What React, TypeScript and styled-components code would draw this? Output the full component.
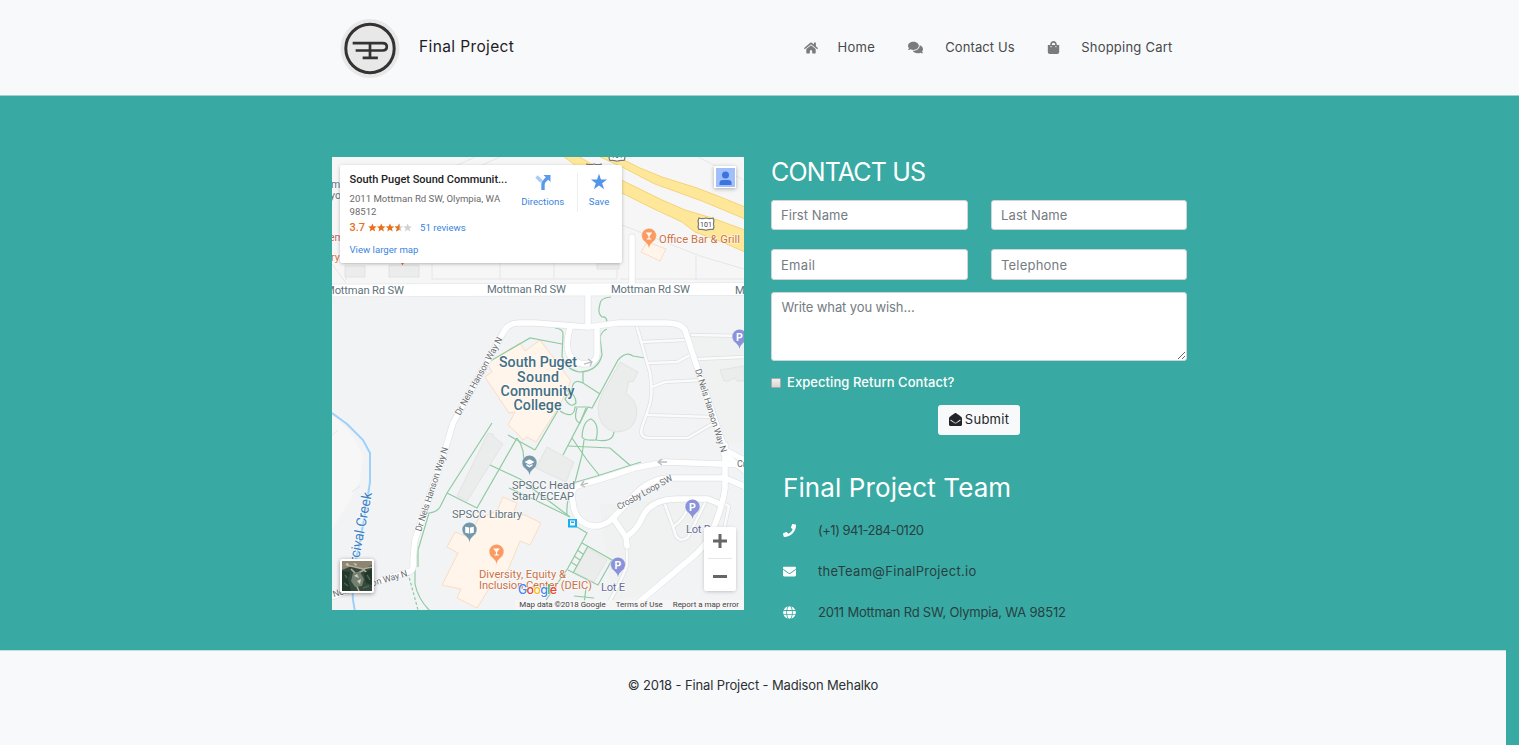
import React from 'react';
import styled, { createGlobalStyle } from 'styled-components';
import { FaHome, FaComments, FaShoppingBag, FaEnvelopeOpen, FaPhone, FaEnvelope, FaGlobe } from 'react-icons/fa';

const Global = createGlobalStyle`
  *, *::before, *::after { box-sizing: border-box; }
  html, body { margin: 0; padding: 0; }
  body {
    background: #38aaa3;
    color: #212529;
    font-family: Inter, 'Open Sans', sans-serif;
    font-size: 13px;
    line-height: 1.5;
    overflow: hidden;
  }
  h1, h2, p { margin: 0; font-weight: 400; }
`;

const Page = styled.div`
  display: flex;
  flex-direction: column;
  height: 745px;
`;

const Header = styled.header`
  height: 96px;
  flex: none;
  background: #f8f9fb;
  border-bottom: 1px solid #9fd0d0;
  display: flex;
  justify-content: center;
`;

const HeaderInner = styled.div`
  width: 855px;
  display: flex;
  align-items: center;
  justify-content: space-between;
  padding: 0 14.5px 0 8px;
`;

const Brand = styled.a`
  display: flex;
  align-items: center;
  gap: 19px;
  font-size: 15.5px;
  color: #1d2023;
  svg { width: 60px; height: 60px; display: block; }
`;

const BrandName = styled.span`
  padding-bottom: 2px;
`;

const Nav = styled.nav`
  display: flex;
  align-items: center;
  color: #48494b;
`;

const NavItem = styled.a<{ $gap: number; $after: number }>`
  display: flex;
  align-items: center;
  gap: ${(p) => p.$gap}px;
  margin-right: ${(p) => p.$after}px;
  svg { color: #7b7b7b; display: block; }
`;

const Tracked = styled.span<{ $track?: number; $weight?: number }>`
  letter-spacing: ${(p) => p.$track ?? 0}px;
  font-weight: ${(p) => p.$weight ?? 400};
  white-space: nowrap;
`;

const Main = styled.main`
  flex: none;
  height: 553.5px;
  display: flex;
  justify-content: center;
  gap: 27px;
  padding-top: 61px;
`;

const MapFrame = styled.section`
  position: relative;
  width: 412px;
  height: 453px;
  overflow: hidden;
  background: #f2f3f5;
  font-family: Roboto, sans-serif;
  > svg { display: block; }
`;

const PlaceCard = styled.div`
  position: absolute;
  left: 8px;
  top: 8px;
  width: 282px;
  height: 98px;
  background: #fff;
  border-radius: 2px;
  box-shadow: 0 1px 4px -1px rgba(0, 0, 0, 0.4);
  display: flex;
  padding: 8px 0 0 9.5px;
  font-size: 9.6px;
  line-height: 13px;
  color: #6b6b6b;
`;

const PlaceInfo = styled.div`
  width: 163px;
  display: flex;
  flex-direction: column;
`;

const PlaceTitle = styled.div`
  font-size: 11px;
  font-weight: 500;
  color: #222;
  line-height: 13px;
  white-space: nowrap;
  margin-bottom: 6px;
`;

const Rating = styled.div`
  display: flex;
  align-items: center;
  gap: 3px;
  margin: 3px 0 9px;
  color: #e7711b;
  font-size: 11px;
  font-weight: 500;
`;

const MapLink = styled.span<{ $left?: number }>`
  color: #3a84df;
  font-size: 9.6px;
  font-weight: 400;
  margin-left: ${(p) => p.$left ?? 0}px;
`;

const PlaceAction = styled.div<{ $width: number; $line?: boolean }>`
  width: ${(p) => p.$width}px;
  height: 39px;
  display: flex;
  flex-direction: column;
  align-items: center;
  gap: 4px;
  padding-right: ${(p) => (p.$line ? 4 : 0)}px;
  color: #3a84df;
  border-right: ${(p) => (p.$line ? '1px solid #eeeeee' : '0')};
  svg { display: block; }
`;

const Avatar = styled.div`
  position: absolute;
  left: 382px;
  top: 9px;
  width: 22px;
  height: 22px;
  padding: 1.5px;
  background: #fff;
  box-shadow: 0 1px 4px rgba(0, 0, 0, 0.3);
  svg { display: block; }
`;

const Thumb = styled.div`
  position: absolute;
  left: 8px;
  top: 402px;
  width: 34px;
  height: 34px;
  padding: 2px;
  background: #fff;
  border-radius: 2px;
  box-shadow: 0 1px 4px rgba(0, 0, 0, 0.4);
  svg { display: block; }
`;

const ZoomBox = styled.div`
  position: absolute;
  left: 372px;
  top: 370px;
  width: 32px;
  height: 64px;
  background: #fff;
  border-radius: 2px;
  box-shadow: 0 1px 4px -1px rgba(0, 0, 0, 0.3);
  svg { display: block; }
`;

const Legal = styled.div`
  position: absolute;
  right: 0;
  bottom: 0;
  height: 10px;
  padding: 0 5px 0 4px;
  display: flex;
  gap: 10px;
  background: rgba(247, 247, 247, 0.75);
  color: #444;
  font-size: 7.95px;
  line-height: 10px;
  white-space: nowrap;
`;

const Side = styled.section`
  width: 416px;
  display: flex;
  flex-direction: column;
`;

const Heading = styled.h1<{ $track: number; $size: number }>`
  font-size: ${(p) => p.$size}px;
  line-height: 30px;
  color: #fff;
  font-weight: 400;
  letter-spacing: ${(p) => p.$track}px;
  white-space: nowrap;
`;

const Fields = styled.div`
  display: grid;
  grid-template-columns: 197px 196px;
  column-gap: 23px;
  row-gap: 19px;
  margin-top: 13px;
`;

const fieldBox = `
  border: 1px solid #ced4da;
  border-radius: 3px;
  background: #fff;
  outline: 0;
  font-family: Inter, 'Open Sans', sans-serif;
  font-size: 13px;
`;

const Field = styled.input<{ $track: number }>`
  ${fieldBox}
  width: 100%;
  height: 30.4px;
  padding: 0 9px;
  &::placeholder { color: #757c83; opacity: 1; letter-spacing: ${(p) => p.$track}px; }
`;

const Message = styled.textarea<{ $track: number }>`
  ${fieldBox}
  width: 416px;
  height: 69px;
  margin-top: 12.2px;
  padding: 4px 9.5px;
  line-height: 20px;
  resize: vertical;
  display: block;
  &::placeholder { color: #757c83; opacity: 1; letter-spacing: ${(p) => p.$track}px; }
`;

const CheckRow = styled.label`
  display: flex;
  align-items: center;
  gap: 6px;
  height: 20px;
  margin-top: 12px;
  color: #fff;
`;

const CheckBox = styled.span`
  width: 10px;
  height: 10px;
  background: linear-gradient(#f0f0f0, #d6d6d6);
  border: 1px solid #a9a9a9;
  border-radius: 1px;
`;

const Submit = styled.button`
  align-self: center;
  display: flex;
  align-items: center;
  justify-content: center;
  gap: 3px;
  width: 82px;
  height: 30px;
  margin-top: 12px;
  padding: 0;
  border: 0;
  border-radius: 3px;
  background: #f8f9fb;
  color: #212529;
  font: inherit;
`;

const Team = styled.div`
  padding: 38px 0 0 12px;
`;

const TeamRow = styled.div<{ $top: number }>`
  display: flex;
  align-items: center;
  gap: 22px;
  height: 20px;
  margin-top: ${(p) => p.$top}px;
  color: #293f42;
  svg { color: #fff; display: block; }
`;

const Footer = styled.footer`
  flex: none;
  width: 1506px;
  height: 95.5px;
  padding-top: 25px;
  background: #f8f9fb;
  border-top: 1px solid #c9dcdf;
  text-align: center;
  color: #2c3034;
`;

const Logo = () => (
  <svg viewBox="0 0 60 60" fill="none" stroke="#333" strokeLinecap="square">
    <circle cx="30" cy="30.5" r="29.5" fill="#e9e8e8" stroke="none" />
    <circle cx="30" cy="30.5" r="24.2" strokeWidth="3" />
    <path d="M14 25.2H42.5Q46.8 25.2 46.8 28.7Q46.8 32.5 42.5 32.5H17M30 25.2V39.8M24 39.8H36.5" strokeWidth="2.7" />
  </svg>
);

const roads = {
  main: [
    'M325 599L373 583L411 571Q414 568 413 560L415 540L430 495L443 457L453 423L477 380L503 333Q508 323 518 323H535L588 327L618 323H666Q681 323 685 330L697 367L725 450L746 461',
    'M588 296V326',
    'M725 445V488Q723 505 712 532Q706 545 695 555L645 597L632 608',
    'M570 328Q565 345 569 354Q577 367 590 363Q597 361 597 353V328',
    'M746 465L665 462L635 468L598 480L580 485Q571 487 572 497L574 509Q580 527 598 526Q608 524 614 517L628 502Q645 480 668 478H725L746 487',
    'M613 518L626 537L627 546',
    'M626 537Q637 530 642 518Q650 499 678 499H708L720 504',
    'M632 237V286',
    'M724 454L744 470',
  ],
  thin: [
    'M637 327L650 373Q654 395 648 410L642 427Q639 437 648 438H688L712 424',
    'M641 342L685 340', 'M648 363L677 362L690 355', 'M652 387L665 382L702 380', 'M648 415L712 417',
    'M692 335L744 336', 'M698 359L744 357', 'M627 546V565Q622 580 608 604',
    'M664 502L672 524L676 536Q681 543 688 537L705 503', 'M674 526Q686 518 689 503', 'M722 503L729 506L724 530',
  ],
};

const paths = [
  'M492 423L447 493L440 507Q437 512 429 513L418 550V567', 'M415 570V584Q418 599 430 611', 'M447 493L477 508L517 438',
  'M508 435L535 450', 'M517 438Q526 450 523 466', 'M535 450L560 407', 'M490 465L520 479L570 517', 'M487 363L530 338L562 344',
  'M555 328Q564 329 563 335L562 356Q566 370 580 372Q598 371 602 355L600 337Q602 331 607 329',
  'M611 297Q600 298 600 304Q597 313 602 317Q607 316 607 323', 'M583 372V383L600 394', 'M583 383Q573 378 572 389L565 399Q571 409 576 403Q576 394 566 390',
  'M618 360L592 408L588 407L563 455', 'M618 360Q626 351 633 356L645 358', 'M560 411Q574 420 575 407H587', 'M577 408Q573 421 580 423L586 408',
  'M582 437Q583 421 591 419Q600 424 596 440Q584 441 582 437', 'M596 440Q613 443 614 432', 'M568 446L610 448L632 467', 'M572 438L587 460L599 475',
  'M584 440L582 455L575 482', 'M573 483L597 476L641 462', 'M573 485Q566 500 567 515', 'M509 488L535 500L570 517',
  'M577 527L587 533L568 568L546 600', 'M582 543L612 560L598 585L568 570', 'M588 546L573 573M577 550L583 554M574 556L580 560M571 562L577 566', 'M574 596L594 598M586 588L584 604',
];

const Pin = ({ x, y, color, kind }: { x: number; y: number; color: string; kind: 'glass' | 'p' | 'book' | 'cap' }) => (
  <g transform={`translate(${x} ${y})`}>
    <path d="M0 12.5Q-1 8 -4 5.8A7.4 7.4 0 1 1 4 5.8Q1 8 0 12.5Z" fill={color} stroke="#fff" strokeOpacity=".6" strokeWidth=".6" />
    {kind === 'glass' && <path d="M-3.3-3.4H3.3L.6 0V2.6H2.2V3.6H-2.2V2.6H-.6V0Z" fill="#fff" />}
    {kind === 'p' && <text textAnchor="middle" y="4" fontSize="10.5" fontWeight="700" fill="#fff">P</text>}
    {kind === 'book' && <path d="M-4.3-3.2L-.4-2.5V3.6L-4.3 2.8ZM4.3-3.2L.4-2.5V3.6L4.3 2.8Z" fill="#fff" />}
    {kind === 'cap' && <path d="M0-3.8L5-1L0 1.7L-5-1ZM-3 1L0 2.7L3 1V2.8L0 4.4L-3 2.8Z" fill="#fff" />}
  </g>
);

const Shield = ({ x, y }: { x: number; y: number }) => (
  <g transform={`translate(${x} ${y})`}>
    <path d="M-7-6Q-4-4.8 0-6Q4-4.8 7-6L8-3Q6.8 0 8 3L7 5.5Q3 5 0 6.2Q-3 5-7 5.5L-8 3Q-6.8 0-8-3Z" fill="#fff" stroke="#777" strokeWidth="1.2" />
    <text textAnchor="middle" y="2.6" fontSize="7" fill="#444">101</text>
  </g>
);

type LabelProps = { x: number; y: number; children: string; size?: number; fill?: string; rotate?: number; length?: number; weight?: number; anchor?: 'start' | 'middle' | 'end' };
const Label = ({ x, y, children, size = 11.2, fill = '#61737c', rotate = 0, length, weight = 400, anchor = 'start' }: LabelProps) => (
  <text
    transform={`translate(${x} ${y}) rotate(${rotate})`}
    fontSize={size} fontWeight={weight} fill={fill} textAnchor={anchor} textLength={length}
    stroke="#fff" strokeOpacity=".6" strokeWidth="1.6" strokeLinejoin="round" paintOrder="stroke"
  >{children}</text>
);

const CampusMap = () => (
  <svg width="412" height="453" viewBox="332 157 412 453" fontFamily="Roboto, sans-serif">
    <rect x="332" y="157" width="412" height="453" fill="#f2f3f5" />
    <rect x="332" y="157" width="412" height="130" fill="#f6f6f6" />
    <path d="M332 415L350 432L363 455L360 480L350 500L332 530Z" fill="#f7f7f7" />
    <path d="M690 332L744 336V440L726 446Z M600 505L660 500L730 503L710 545L640 596L612 600Z" fill="#efefef" opacity=".7" />
    <g fill="none" stroke="#e5e6e8" strokeWidth="1">
      <path d="M332 264L346 283M346 265V280M432 263V279H617V263M500 263V279M554 263V279M622 225L700 256L744 269M696 256V280M620 279H744M455 166L475 157M480 166L500 157M698 157L744 180M332 435L338 430M352 492L360 486" />
    </g>
    <g fill="#ebecec" stroke="#e0e0e0" strokeWidth=".8">
      <path d="M345 266H365V277H345ZM389 265H419V277H389ZM597 262H619V269H597Z" />
      <path d="M488 433L493 434L494 437L503 444L467 501L457 496Z" />
      <path d="M620 362L638 372L633 382L629 381L626 393Q637 401 637 413Q635 432 616 432Q598 429 598 408Q600 395 605 389Z" />
      <path d="M720 370L744 366V381L737 381L735 378L728 381L724 381Z" />
      <path d="M547 447L574 462L566 482L536 468Z M588 548L607 560L594 582L574 572Z" />
    </g>
    <g fill="#fff5ea" stroke="#fbdcc3" strokeWidth="1">
      <path d="M487 363L520 343L525 351L540 340L571 381L560 405L536 442L527 437L523 440L517 433L508 425L515 412L509 413L485 377L492 372Z" />
      <path d="M503 497L517 503L514 511L527 516L541 523L530 545L520 541L508 570L490 587L477 608L457 598L461 589L442 585L458 553L447 547L455 532L468 537L479 518L497 511Z" />
      <path d="M647 242L666 249L660 261L641 252Z" />
    </g>
    <path d="M332 413L347 424L363 440L370 453V482L368 495Q363 528 357 555Q349 588 355 611" fill="none" stroke="#9dd0fa" strokeWidth="2" />
    <g fill="none" stroke="#8fcba2" strokeWidth="1.2">
      {paths.map((d) => <path key={d} d={d} />)}
      <path d="M408 573L418 610" strokeDasharray="3 2" />
    </g>
    <path d="M563 156L578 156L605 172L662 200L685 210L712 218L745 230V252L722 242L695 232L682 222L652 208L622 193L595 180Z" fill="#ffe79a" stroke="#f4d37a" strokeWidth="1" />
    <path d="M598 156H616L640 168L662 177L697 188L718 196L745 207V219L702 201L655 184L622 167Z" fill="#ffe79a" stroke="#f4d37a" strokeWidth="1" />
    <g fill="none" strokeLinecap="round" strokeLinejoin="round">
      <g stroke="#dfe0e2" strokeWidth="4">{roads.thin.map((d) => <path key={d} d={d} />)}</g>
      <g stroke="#fbfbfb" strokeWidth="2.6">{roads.thin.map((d) => <path key={d} d={d} />)}</g>
      <g stroke="#dfe1e4" strokeWidth="6.8">{roads.main.map((d) => <path key={d} d={d} />)}</g>
      <path d="M328 290.5L748 289" stroke="#e6e7e9" strokeWidth="13.5" />
      <g stroke="#fff" strokeWidth="5.6">{roads.main.map((d) => <path key={d} d={d} />)}</g>
      <path d="M328 290.5L748 289" stroke="#fff" strokeWidth="12" />
    </g>
    <path d="M584 364L591 362M588 359L592 362L590 366M667 462L659 462M662 459L658 462L662 465M588 483L581 485M584 481L581 485L585 487" fill="none" stroke="#b9bdc1" strokeWidth="1.3" />

    <Label x={404} y={294} length={79} anchor="end">Mottman Rd SW</Label>
    <Label x={487} y={293} length={79}>Mottman Rd SW</Label>
    <Label x={611} y={293} length={79}>Mottman Rd SW</Label>
    <Label x={735} y={294}>Mottman Rd SW</Label>
    <Label x={460} y={416} rotate={-61} size={9} length={88} fill="#686d72">Dr Nels Hanson Way N</Label>
    <Label x={421} y={532} rotate={-72} size={9} length={88} fill="#686d72">Dr Nels Hanson Way N</Label>
    <Label x={695} y={370} rotate={72.5} size={9} length={87} fill="#686d72">Dr Nels Hanson Way N</Label>
    <Label x={408} y={576} rotate={-16} size={9} length={88} fill="#686d72" anchor="end">Dr Nels Hanson Way N</Label>
    <Label x={619} y={510} rotate={-29} size={9} length={62} fill="#686d72">Crosby Loop SW</Label>
    <Label x={737} y={467} size={9} fill="#686d72">Crosby Loop SW</Label>
    <Label x={372} y={493} rotate={-79} size={14} length={87} fill="#3d82c4" anchor="end">Percival Creek</Label>
    <Label x={331} y={188} size={10.5}>m</Label>
    <Label x={330} y={199} size={10.5}>yo</Label>
    <Label x={329} y={241} size={10.5} fill="#bd5f62">em</Label>
    <Label x={331} y={261} size={10.5} fill="#cf6f3d">ry</Label>
    <path d="M400 261L402.5 265.5L405 261Z" fill="#ef6455" />

    <Label x={538} y={367} size={14.2} weight={500} length={78} fill="#436f85" anchor="middle">South Puget</Label>
    <Label x={538} y={381.5} size={14.2} weight={500} length={42} fill="#436f85" anchor="middle">Sound</Label>
    <Label x={537.5} y={396} size={14.2} weight={500} length={74} fill="#436f85" anchor="middle">Community</Label>
    <Label x={537.5} y={410} size={14.2} weight={500} length={48} fill="#436f85" anchor="middle">College</Label>
    <Label x={512} y={489} length={63}>SPSCC Head</Label>
    <Label x={512} y={500} length={62}>Start/ECEAP</Label>
    <Label x={452} y={518} length={70}>SPSCC Library</Label>
    <Label x={479} y={578} length={87} fill="#cb7246">Diversity, Equity &amp;</Label>
    <Label x={479} y={589} length={113} fill="#cb7246">Inclusion Center (DEIC)</Label>
    <Label x={601} y={591} length={24} fill="#686f98">Lot E</Label>
    <Label x={686} y={533} length={25} fill="#686f98">Lot D</Label>
    <Label x={659} y={243} length={81} fill="#cb7246">Office Bar &amp; Grill</Label>

    <Shield x={706} y={224} />
    <Shield x={617} y={155} />
    <Shield x={594} y={170} />
    <Pin x={649} y={236} color="#fb9b62" kind="glass" />
    <Pin x={496.5} y={552} color="#fb9b62" kind="glass" />
    <Pin x={469.5} y={530} color="#7597a9" kind="book" />
    <Pin x={529.5} y={463} color="#7597a9" kind="cap" />
    <Pin x={739.5} y={337} color="#8a93da" kind="p" />
    <Pin x={692.5} y={507} color="#8a93da" kind="p" />
    <Pin x={618} y={565} color="#8a93da" kind="p" />
    <rect x="568" y="519" width="9" height="8.5" fill="#14b1f2" />
    <path d="M570 520.5H575V525.5H570ZM571 521.5V523H574V521.5Z" fill="#fff" fillRule="evenodd" />
    <text x="518" y="594" fontSize="12.5" fontWeight="500" fontFamily="Inter, sans-serif" textLength="39" stroke="#fff" strokeWidth="1" paintOrder="stroke">
      <tspan fill="#4285f4">G</tspan><tspan fill="#ea4335">o</tspan><tspan fill="#fbbc05">o</tspan><tspan fill="#4285f4">g</tspan><tspan fill="#34a853">l</tspan><tspan fill="#ea4335">e</tspan>
    </text>
  </svg>
);

const starPath = 'M6 .5L7.7 4.2L11.7 4.6L8.7 7.3L9.6 11.3L6 9.2L2.4 11.3L3.3 7.3L.3 4.6L4.3 4.2Z';

const Stars = () => (
  <svg width="44" height="9" viewBox="0 0 60 12">
    {[0, 1, 2, 3, 4].map((i) => <path key={i} d={starPath} transform={`translate(${i * 12} 0)`} fill={i < 3 ? '#e7711b' : '#d2d2d2'} />)}
    <path d="M7 .5V9.2L2.4 11.3L3.3 7.3L.3 4.6L4.3 4.2Z" transform="translate(36 0)" fill="#e7711b" />
  </svg>
);

const SatelliteArt = () => (
  <svg width="30" height="30" viewBox="0 0 30 30">
    <rect width="30" height="30" fill="#35493c" />
    <path d="M0 0H30V4L22 8L10 5L0 9Z" fill="#8d8570" />
    <path d="M4 4L13 6L21 8L30 6M9 8L14 13L12 19L17 30M14 13L22 9L27 14" stroke="#b4ad9d" fill="none" strokeWidth="1.5" />
    <path d="M11 12L18 11L22 18L20 25L13 26L9 20Z" fill="#748071" />
    <path d="M12 15L15 13L17 17ZM15 20L19 18L18 23ZM3 3L6 2L7 5ZM11 2L15 3L14 5Z" fill="#d0ccc0" />
    <path d="M0 10L8 11L6 18L9 30H0ZM22 12L30 8V24L24 22Z" fill="#22382a" />
    <path d="M3 14L5 17M2 22L6 25M25 14L28 19M21 27L27 25" stroke="#4c6550" strokeWidth="1.5" />
  </svg>
);

export default function App() {
  return (
    <Page>
      <Global />
      <Header>
        <HeaderInner>
          <Brand><Logo /><BrandName><Tracked $track={0.38}>Final Project</Tracked></BrandName></Brand>
          <Nav>
            <NavItem $gap={19.5} $after={33}><FaHome size={14} /><Tracked $track={0.3}>Home</Tracked></NavItem>
            <NavItem $gap={22} $after={32}><FaComments size={15} /><Tracked $track={0.1}>Contact Us</Tracked></NavItem>
            <NavItem $gap={21.5} $after={0}><FaShoppingBag size={13} /><Tracked $track={0.23}>Shopping Cart</Tracked></NavItem>
          </Nav>
        </HeaderInner>
      </Header>
      <Main>
        <MapFrame>
          <CampusMap />
          <PlaceCard>
            <PlaceInfo>
              <PlaceTitle>South Puget Sound Communit...</PlaceTitle>
              <div>2011 Mottman Rd SW, Olympia, WA 98512</div>
              <Rating>3.7 <Stars /><MapLink $left={5}>51 reviews</MapLink></Rating>
              <MapLink>View larger map</MapLink>
            </PlaceInfo>
            <PlaceAction $width={65.5} $line>
              <svg width="18" height="18" viewBox="0 0 18 18" fill="none" stroke="#5a9ae8" strokeWidth="3.4">
                <path d="M2.5 3.5L7.5 8.5" stroke="#a6cbf5" /><path d="M9 17V11.5Q9 9 11 7.5L13.5 5" /><path d="M9.5 2H16.5V9Z" fill="#5a9ae8" stroke="none" />
              </svg>
              Directions
            </PlaceAction>
            <PlaceAction $width={42}>
              <svg width="18" height="18" viewBox="0 0 12 12"><path d="M6 .5L7.3 4.4H11.4L8.1 6.8L9.4 10.8L6 8.4L2.6 10.8L3.9 6.8L.6 4.4H4.7Z" fill="#5295e8" /></svg>
              Save
            </PlaceAction>
          </PlaceCard>
          <Avatar>
            <svg width="19" height="19" viewBox="0 0 19 19"><rect width="19" height="19" fill="#a0bffb" /><circle cx="9.5" cy="7" r="3.5" fill="#3b73e0" /><path d="M3.5 17V15Q3.5 12 7 12H12Q15.5 12 15.5 15V17Z" fill="#3b73e0" /></svg>
          </Avatar>
          <Thumb><SatelliteArt /></Thumb>
          <ZoomBox>
            <svg width="32" height="64" viewBox="0 0 32 64"><path d="M9 14H23M16 7V21M9 49.5H23" stroke="#666" strokeWidth="3" /><path d="M4 31.5H28" stroke="#e6e6e6" /></svg>
          </ZoomBox>
          <Legal><span>Map data ©2018 Google</span><span>Terms of Use</span><span>Report a map error</span></Legal>
        </MapFrame>
        <Side>
          <Heading $size={25} $track={-0.85}>CONTACT US</Heading>
          <Fields>
            <Field $track={0.05} placeholder="First Name" />
            <Field $track={0.12} placeholder="Last Name" />
            <Field $track={0.3} placeholder="Email" />
            <Field $track={0.2} placeholder="Telephone" />
          </Fields>
          <Message $track={-0.11} placeholder="Write what you wish…" />
          <CheckRow><CheckBox /><Tracked $track={0.07} $weight={450}>Expecting Return Contact?</Tracked></CheckRow>
          <Submit><FaEnvelopeOpen size={13} /><Tracked $track={0.25}>Submit</Tracked></Submit>
          <Team>
            <Heading $size={26} $track={0.1}>Final Project Team</Heading>
            <TeamRow $top={17.5}><FaPhone size={13} /><Tracked $track={-0.5}>(+1) 941-284-0120</Tracked></TeamRow>
            <TeamRow $top={21}><FaEnvelope size={13} /><Tracked $track={0.3}>theTeam@FinalProject.io</Tracked></TeamRow>
            <TeamRow $top={21}><FaGlobe size={13} /><Tracked $track={-0.19}>2011 Mottman Rd SW, Olympia, WA 98512</Tracked></TeamRow>
          </Team>
        </Side>
      </Main>
      <Footer><Tracked $track={-0.13}>© 2018 - Final Project - Madison Mehalko</Tracked></Footer>
    </Page>
  );
}
